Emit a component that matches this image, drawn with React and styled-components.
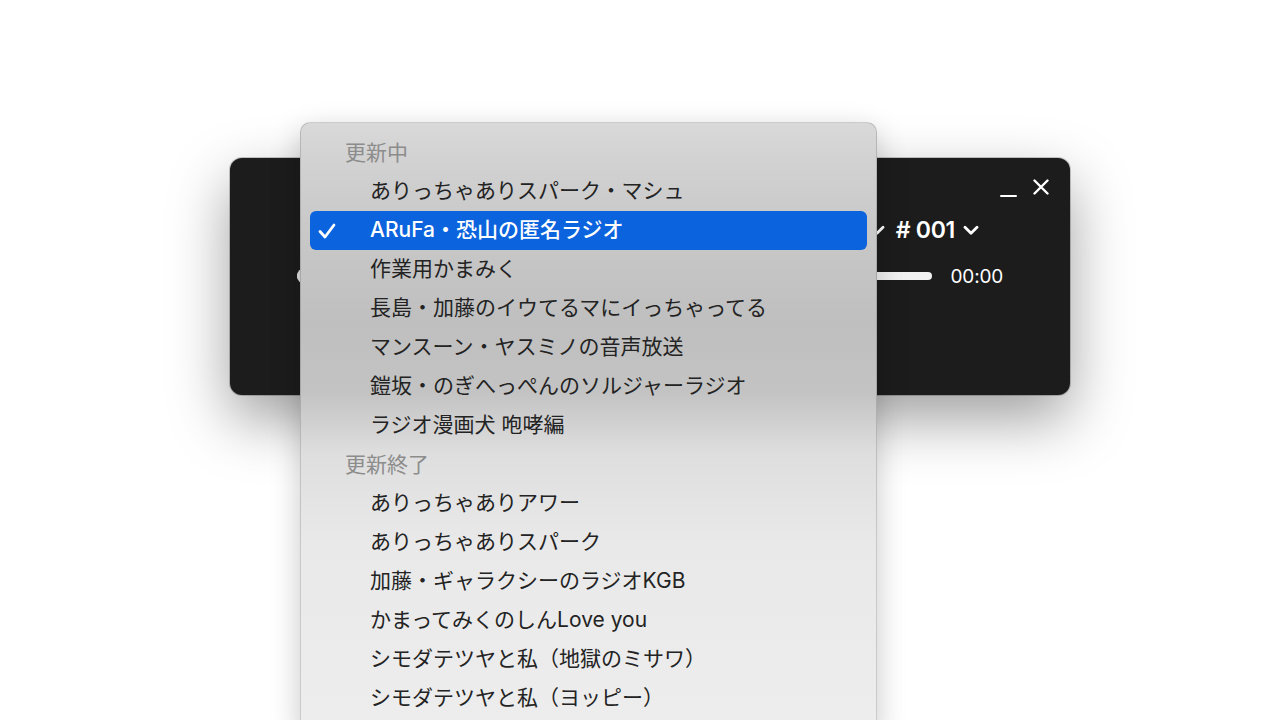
import React from 'react';
import styled, {createGlobalStyle} from 'styled-components';

const GlobalStyle = createGlobalStyle`
    html, body {
        margin: 0;
        padding: 0;
        background: #ffffff;
        overflow: hidden;
        font-family: Inter, "Noto Sans CJK JP", sans-serif;
    }
`

const sections = [
    {
        title: '更新中',
        items: [
            'ありっちゃありスパーク・マシュ',
            'ARuFa・恐山の匿名ラジオ',
            '作業用かまみく',
            '長島・加藤のイウてるマにイっちゃってる',
            'マンスーン・ヤスミノの音声放送',
            '鎧坂・のぎへっぺんのソルジャーラジオ',
            'ラジオ漫画犬 咆哮編',
        ],
    },
    {
        title: '更新終了',
        items: [
            'ありっちゃありアワー',
            'ありっちゃありスパーク',
            '加藤・ギャラクシーのラジオKGB',
            'かまってみくのしんLove you',
            'シモダテツヤと私（地獄のミサワ）',
            'シモダテツヤと私（ヨッピー）',
        ],
    },
]

const selected = 'ARuFa・恐山の匿名ラジオ'

function Chevron({size = 16}) {
    return (
        <svg width={size} height={size * 0.65} viewBox="0 0 16 10" fill="none">
            <polyline points="2,2 8,8 14,2" stroke="#fff" strokeWidth="2.8" strokeLinecap="round" strokeLinejoin="round" />
        </svg>
    )
}

export default function App() {
    return (
        <Stage>
            <GlobalStyle />
            <Player>
                <TitleBar>
                    <MinimizeButton />
                    <CloseButton>
                        <svg width="16" height="16" viewBox="0 0 16 16">
                            <path d="M1.5 1.5 L14.5 14.5 M14.5 1.5 L1.5 14.5" stroke="#fff" strokeWidth="2.4" strokeLinecap="round" />
                        </svg>
                    </CloseButton>
                </TitleBar>
                <Body>
                    <SelectRow>
                        {/* program picker: its label sits under the open menu */}
                        <Select>
                            <Chevron />
                        </Select>
                        <Select>
                            <span># 001</span>
                            <Chevron />
                        </Select>
                    </SelectRow>
                    <ProgressRow>
                        <Track>
                            <Knob />
                        </Track>
                        <Time>00:00</Time>
                    </ProgressRow>
                </Body>
            </Player>

            <Menu>
                {sections.map(section => (
                    <React.Fragment key={section.title}>
                        <SectionTitle>{section.title}</SectionTitle>
                        {section.items.map(item => {
                            const active = item === selected
                            return <Item key={item} active={active}>
                                <CheckSlot>
                                    {active &&
                                        <svg width="18" height="16" viewBox="0 0 18 16" fill="none">
                                            <polyline points="2,8.5 7,14 16,2" stroke="#fff" strokeWidth="2.8" strokeLinecap="round" strokeLinejoin="round" />
                                        </svg>}
                                </CheckSlot>
                                {item}
                            </Item>
                        })}
                    </React.Fragment>
                ))}
            </Menu>
        </Stage>
    )
}

const Stage = styled.div`
    position: relative;
    width: 1280px;
    height: 720px;
    box-sizing: border-box;
    padding: 158px 0 0 230px;
`

const Player = styled.div`
    width: 840px;
    height: 237px;
    box-sizing: border-box;
    padding: 21px 21px 0 21px;
    background: #1c1c1c;
    border-radius: 12px;
    box-shadow: 0 24px 60px rgba(0, 0, 0, 0.38), 0 0 0 1px rgba(0, 0, 0, 0.2);
    display: flex;
    flex-direction: column;
    color: #fff;
`

const TitleBar = styled.div`
    display: flex;
    justify-content: flex-end;
    align-items: flex-end;
    gap: 16px;
    height: 16px;
`

const MinimizeButton = styled.div`
    width: 17px;
    height: 2px;
    margin-bottom: -2px;
    background: #fff;
    border-radius: 1px;
`

const CloseButton = styled.div`
    display: flex;
    width: 16px;
    height: 16px;
`

const Body = styled.div`
    display: flex;
    flex-direction: column;
    padding: 0 46px;
`

const SelectRow = styled.div`
    display: flex;
    justify-content: flex-end;
    align-items: center;
    gap: 11px;
    height: 30px;
    margin-top: 20px;
    padding-right: 24px;
`

const Select = styled.div`
    display: flex;
    align-items: center;
    gap: 8px;
    font-size: 23px;
    font-weight: 600;
    letter-spacing: -0.3px;
    white-space: nowrap;
`

const ProgressRow = styled.div`
    display: flex;
    align-items: center;
    gap: 19px;
    height: 20px;
    margin-top: 21px;
`

const Track = styled.div`
    position: relative;
    flex: 1;
    height: 8px;
    border-radius: 4px;
    background: #f2f2f2;
`

const Knob = styled.div`
    position: absolute;
    left: 0;
    top: -4px;
    width: 16px;
    height: 16px;
    border-radius: 50%;
    background: #e0e0e0;
`

const Time = styled.span`
    font-size: 19px;
    letter-spacing: -0.2px;
    color: #fff;
`

const Menu = styled.div`
    position: absolute;
    left: 300px;
    top: 122px;
    width: 577px;
    box-sizing: border-box;
    padding: 10px 9px 14px;
    border: 1px solid rgba(0, 0, 0, 0.14);
    border-radius: 10px;
    background: linear-gradient(
        to bottom,
        #d9d9d9 0px,
        #d2d2d2 36px,
        #c9c9c9 100px,
        #bfbfbf 200px,
        #c3c3c3 270px,
        #dedede 330px,
        #e9e9e9 420px,
        #ededed 600px
    );
    box-shadow: 0 10px 30px rgba(0, 0, 0, 0.22);
    font-family: Inter, "Noto Sans CJK JP", sans-serif;
`

const SectionTitle = styled.div`
    display: flex;
    align-items: center;
    height: 39px;
    box-sizing: border-box;
    padding: 0 0 0 35px;
    line-height: 1;
    font-size: 21px;
    color: #8c8c8c;
`

const Item = styled.div`
    display: flex;
    align-items: center;
    height: 39px;
    box-sizing: border-box;
    padding-bottom: 3px;
    line-height: 1;
    border-radius: 6px;
    font-size: 21px;
    white-space: nowrap;
    color: ${props => props.active ? '#ffffff' : '#232323'};
    background: ${props => props.active ? '#0b63dd' : 'transparent'};
    font-weight: ${props => props.active ? 500 : 400};
`

const CheckSlot = styled.div`
    display: flex;
    align-items: center;
    justify-content: flex-start;
    width: 60px;
    padding: 3px 0 0 8px;
    box-sizing: border-box;
`
